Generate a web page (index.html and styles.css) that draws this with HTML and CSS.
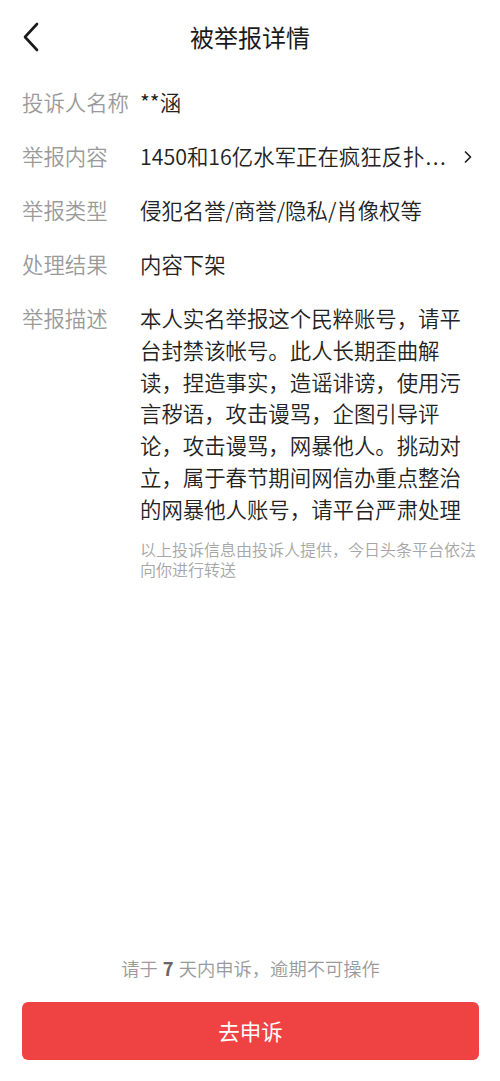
FILE: index.html
```html
<!DOCTYPE html>
<html lang="zh-CN">
<head>
<meta charset="utf-8">
<title>被举报详情</title>
<link rel="stylesheet" href="styles.css">
</head>
<body>
<div class="page">
  <header class="nav">
    <span class="back">
      <svg width="18" height="30" viewBox="0 0 18 30"><path d="M15 2 L3 15 L15 28" fill="none" stroke="#1a1a1a" stroke-width="2.6" stroke-linecap="round" stroke-linejoin="round"/></svg>
    </span>
    <h1 class="title">被举报详情</h1>
  </header>

  <main class="rows">
    <div class="row">
      <div class="label">投诉人名称</div>
      <div class="value">**涵</div>
    </div>
    <div class="row">
      <div class="label">举报内容</div>
      <div class="value link"><span class="ellipsis">1450和16亿水军正在疯狂反扑<span class="dots">...</span></span>
        <svg class="chev" width="10" height="14" viewBox="0 0 10 14"><path d="M2.5 2 L7.5 7 L2.5 12" fill="none" stroke="#222" stroke-width="1.7" stroke-linecap="round" stroke-linejoin="round"/></svg>
      </div>
    </div>
    <div class="row">
      <div class="label">举报类型</div>
      <div class="value">侵犯名誉/商誉/隐私/肖像权等</div>
    </div>
    <div class="row">
      <div class="label">处理结果</div>
      <div class="value">内容下架</div>
    </div>
    <div class="row">
      <div class="label">举报描述</div>
      <div class="value">
        <p class="desc">本人实名举报这个民粹账号，请平台封禁该帐号。此人长期歪曲解读，捏造事实，造谣诽谤，使用污言秽语，攻击谩骂，企图引导评论，攻击谩骂，网暴他人。挑动对立，属于春节期间网信办重点整治的网暴他人账号，请平台严肃处理</p>
        <p class="note">以上投诉信息由投诉人提供，今日头条平台依法向你进行转送</p>
      </div>
    </div>
  </main>

  <footer class="foot">
    <p class="tip">请于 <b>7</b> 天内申诉，逾期不可操作</p>
    <button class="btn">去申诉</button>
  </footer>
</div>
</body>
</html>
```

FILE: styles.css
```css
* { box-sizing: border-box; }
html, body { margin: 0; padding: 0; background: #fff; }
body {
  font-family: "Noto Sans CJK SC", "Noto Sans", sans-serif;
  font-weight: 350;
  color: #222;
}
.page {
  width: 500px;
  height: 1081px;
  display: flex;
  flex-direction: column;
}
.nav {
  height: 74px;
  display: flex;
  align-items: center;
  justify-content: center;
  position: relative;
}
.back {
  position: absolute;
  left: 22px;
  top: 22px;
  width: 18px;
  height: 30px;
  display: block;
}
.back svg { display: block; }
.title {
  margin: 0;
  font-size: 24px;
  font-weight: 400;
  line-height: 32px;
  color: #1a1a1a;
}
.rows {
  padding: 12px 0 0 22px;
  display: flex;
  flex-direction: column;
  gap: 22px;
}
.row {
  display: flex;
  font-size: 21.4px;
  line-height: 32px;
}
.label {
  width: 118px;
  flex: none;
  color: #9a9a9a;
}
.value {
  width: 338px;
  color: #222;
}
.link {
  display: flex;
  align-items: center;
}
.ellipsis { flex: none; }
.dots { letter-spacing: 1.5px; margin-left: 1px; }
.chev { margin-left: 16px; margin-top: 2px; }
.desc {
  margin: 0;
  line-height: 31.8px;
}
.note {
  margin: 14px 0 0;
  font-size: 16px;
  line-height: 20px;
  color: #a6a6a6;
}
.foot {
  margin-top: auto;
  padding: 0 21px 21px 22px;
  display: flex;
  flex-direction: column;
  align-items: center;
}
.tip {
  margin: 0 0 22px;
  font-size: 18.3px;
  line-height: 24px;
  color: #9a9a9a;
  word-spacing: 1px;
}
.tip b { color: #666; font-weight: 700; }
.btn {
  width: 100%;
  height: 58px;
  border: none;
  border-radius: 6px;
  background: #ef4343;
  color: #fff;
  font-family: inherit;
  font-weight: 400;
  font-size: 21.5px;
  line-height: 30px;
  padding: 0;
}
```
